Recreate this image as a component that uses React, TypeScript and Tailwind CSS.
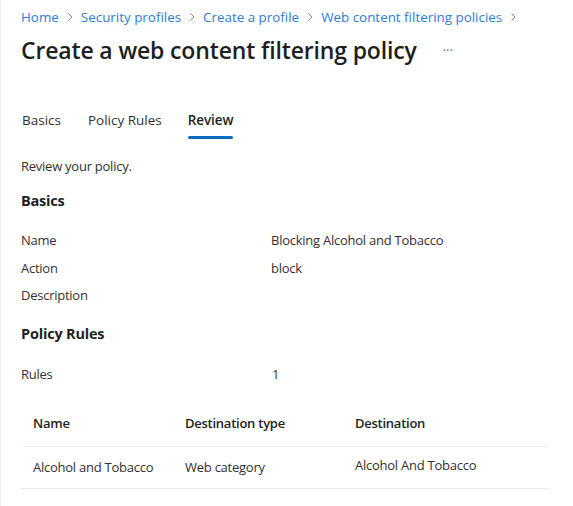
import React from "react";

const crumbs = ["Home", "Security profiles", "Create a profile", "Web content filtering policies"];

function Chevron() {
  return (
    <svg width="12" height="12" viewBox="0 0 12 12" className="mx-[5px] shrink-0">
      <path d="M4.5 2.5 L8 6 L4.5 9.5" fill="none" stroke="#8a8886" strokeWidth="1" />
    </svg>
  );
}

export default function App() {
  return (
    <div
      className="w-[573px] h-[506px] bg-white border-l border-[#ececec] overflow-hidden text-[#323130]"
      style={{ fontFamily: '"Open Sans", "Noto Sans", sans-serif' }}
    >
      <div className="pl-[20px] pt-[7px]">
        <div className="flex items-center h-[20px] text-[13.4px] text-[#2f7dd3]">
          {crumbs.map((c) => (
            <React.Fragment key={c}>
              <span>{c}</span>
              <Chevron />
            </React.Fragment>
          ))}
        </div>
        <div className="flex items-center mt-[8px] h-[30px]">
          <h1 className="text-[23px] font-semibold text-[#201f1e] tracking-[-0.15px]">
            Create a web content filtering policy
          </h1>
          <span className="ml-[26px] text-[#605e5c] text-[13px] leading-none">···</span>
        </div>

        <div className="flex mt-[43px] text-[13.5px] h-[31px]">
          <div className="pl-[1px] pr-[27px] pt-[2px]">Basics</div>
          <div className="pr-[26px] pt-[2px]">Policy Rules</div>
          <div className="relative pt-[2px] font-semibold text-[#201f1e] tracking-[-0.1px]">
            Review
            <div className="absolute left-0 right-0 bottom-[0px] h-[3px] rounded-full bg-[#0f6cbd]" />
          </div>
        </div>

        <div className="mt-[18px] text-[13px] h-[20px] tracking-[-0.25px]">Review your policy.</div>
        <div className="mt-[13px] text-[14.5px] font-bold text-[#201f1e] h-[22px] tracking-[-0.2px]">Basics</div>

        <div className="mt-[15px] text-[13px] tracking-[-0.25px]">
          <div className="grid grid-cols-[250px_1fr] h-[28px] items-center">
            <div>Name</div>
            <div>Blocking Alcohol and Tobacco</div>
          </div>
          <div className="grid grid-cols-[250px_1fr] h-[27px] items-center">
            <div>Action</div>
            <div>block</div>
          </div>
          <div className="grid grid-cols-[250px_1fr] h-[27px] items-center">
            <div>Description</div>
            <div></div>
          </div>
        </div>

        <div className="mt-[14px] text-[14.5px] font-bold text-[#201f1e] h-[22px] tracking-[-0.2px]">Policy Rules</div>

        <div className="mt-[19px] grid grid-cols-[251px_1fr] h-[22px] items-center text-[13px] tracking-[-0.25px]">
          <div>Rules</div>
          <div>1</div>
        </div>

        <div className="mt-[15px] w-[528px] text-[13px] tracking-[-0.25px]">
          <div className="grid grid-cols-[152px_170px_1fr] pl-[12px] h-[46px] items-center font-semibold text-[#201f1e] border-b border-[#f0f0f0]">
            <div>Name</div>
            <div>Destination type</div>
            <div>Destination</div>
          </div>
          <div className="grid grid-cols-[152px_170px_1fr] pl-[12px] h-[42px] items-center border-b border-[#ebebeb]">
            <div>Alcohol and Tobacco</div>
            <div>Web category</div>
            <div className="-mt-[3px]">Alcohol And Tobacco</div>
          </div>
        </div>
      </div>
    </div>
  );
}
